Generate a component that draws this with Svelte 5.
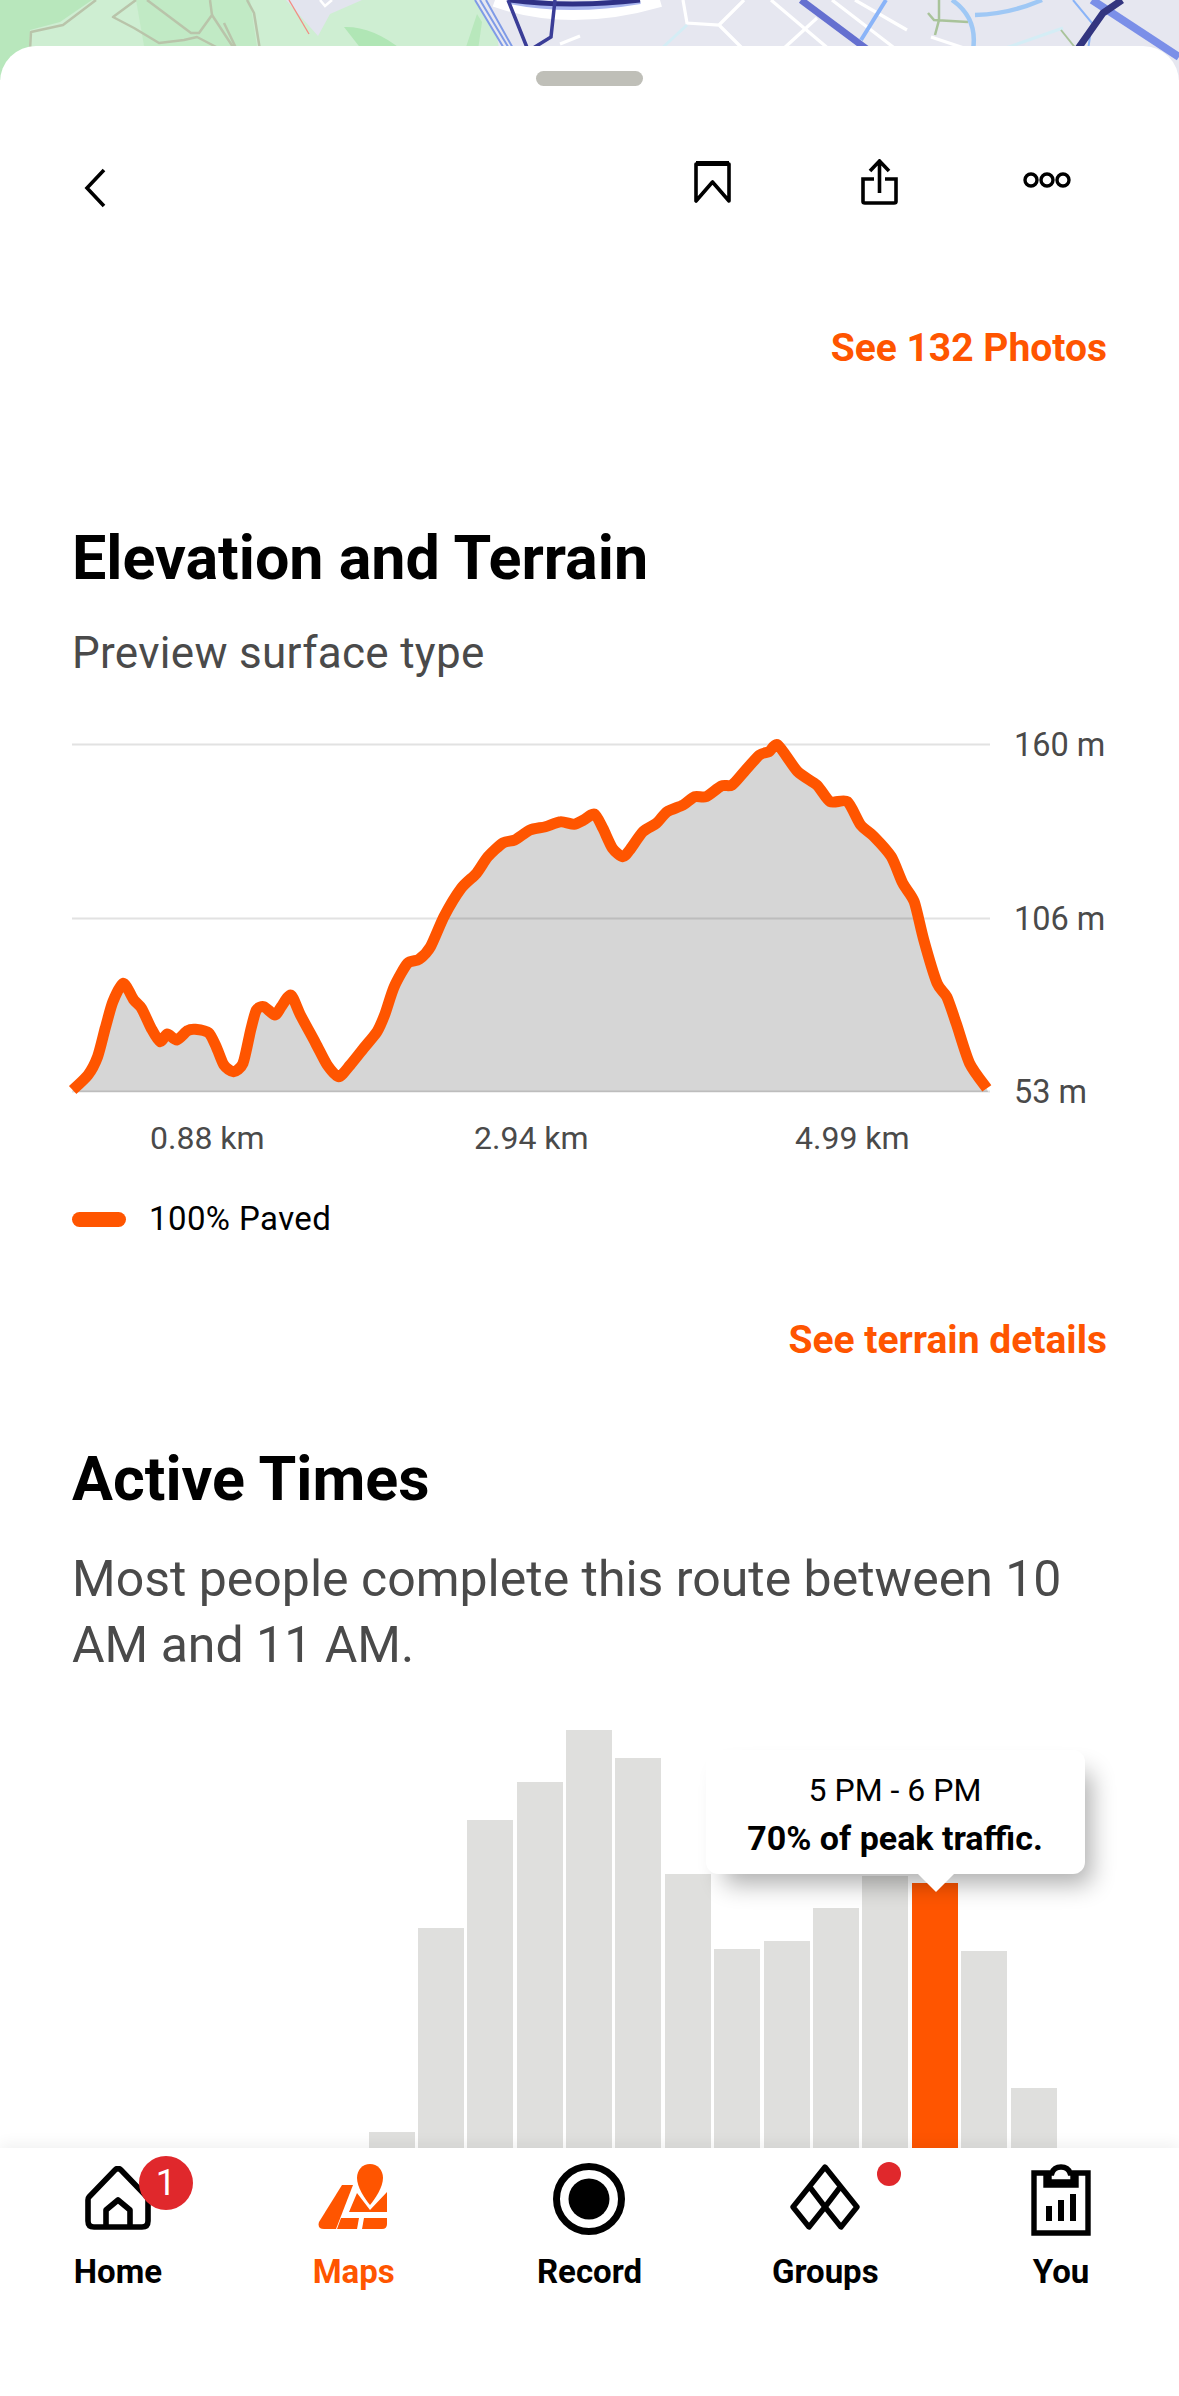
<script>
  const z2 = [[190,1170],[230,1125],[255,1070],[275,985],[295,905],[322,850],[350,900],[370,925],[395,985],[418,1025],[437,1002],[462,1020],[490,992],[510,988],[545,998],[565,1040],[585,1095],[610,1115],[635,1090],[655,990],[670,930],[690,920],[718,945],[735,920],[760,885],[785,945],[825,1030],[855,1095],[885,1130],[915,1095],[950,1045],[985,995],[1005,945],[1030,860],[1065,790],[1095,778],[1125,740],[1160,650],[1205,565],[1245,520],[1275,470],[1315,428],[1345,420],[1385,390],[1425,380],[1465,365],[1500,373],[1525,360]];
  const z3 = [[38,342],[60,385],[85,445],[112,470],[130,450],[165,395],[200,370],[228,335],[270,315],[300,290],[330,290],[370,258],[398,255],[430,215],[470,165],[495,155],[518,135],[570,215],[620,255],[655,305],[700,305],[735,375],[770,410],[815,470],[845,550],[875,605],[900,720],[935,850],[960,890],[985,970],[1020,1090],[1065,1165]];
  const pts = [
    ...z2.map(([x, y]) => [x / 2.613, 700 + y / 3 - 720]),
    ...z3.map(([x, y]) => [580 + x / 2.618, 700 + y / 3 - 720])
  ];
  function smooth(p) {
    const t = 0.12;
    let d = `M${p[0][0].toFixed(1)} ${p[0][1].toFixed(1)}`;
    for (let i = 0; i < p.length - 1; i++) {
      const a = p[Math.max(i - 1, 0)], b = p[i], c = p[i + 1], e = p[Math.min(i + 2, p.length - 1)];
      const c1 = [b[0] + (c[0] - a[0]) * t, b[1] + (c[1] - a[1]) * t];
      const c2 = [c[0] - (e[0] - b[0]) * t, c[1] - (e[1] - b[1]) * t];
      d += ` C${c1[0].toFixed(1)} ${c1[1].toFixed(1)} ${c2[0].toFixed(1)} ${c2[1].toFixed(1)} ${c[0].toFixed(1)} ${c[1].toFixed(1)}`;
    }
    return d;
  }
  const line = smooth(pts);
  const area = `${line} L988 372 L74 372 Z`;
  const tops = [2132, 1928, 1820, 1782, 1730, 1758, 1874, 1949, 1941, 1908, 1876, 1883, 1951, 2088];
  const bars = tops.map((t, i) => ({ h: 2148 - t, on: i === 11 }));
</script>

<div class="page">
  <svg class="map" viewBox="0 0 1179 80" aria-hidden="true">
    <rect width="1179" height="80" fill="#e6e7f0" />
    <path d="M0 0H490L505 80H0Z" fill="#ceeed2" />
    <path d="M0 0H92L60 22 30 30 28 80H0Z" fill="#b8e7bc" />
    <path d="M136 0L250 0 262 80H150Z" fill="#b9e8bd" opacity=".6" />
    <path d="M344 27Q372 26 402 50H362Z" fill="#b0e6b5" />
    <path d="M465 50L477 14 482 22 478 50Z" fill="#b8e8bc" />
    <path d="M286 0L318 36 330 14 362 0Z" fill="#e2e4ee" />
    <path d="M475 0L505 50H540L560 14 650 12 660 0Z" fill="#e6e7f0" />
    <g fill="none" stroke="#b9c4aa" stroke-width="2.5" stroke-linejoin="round">
      <path d="M96 0L63 25 31 32 30 50" />
      <path d="M136 0L113 17 134 28 159 43 184 40 197 37 222 50" />
      <path d="M147 0L191 33 199 33 212 15 210 0" />
      <path d="M212 15L235 50M224 23L237 50M247 0L254 13 260 50" />
    </g>
    <path d="M289 0L309 34" stroke="#f28b82" stroke-width="1.3" fill="none" />
    <path d="M320 0L325 6 332 0" stroke="#fff" stroke-width="2.5" fill="none" />
    <path d="M560 44L580 36" stroke="#fff" stroke-width="3" fill="none" />
    <path d="M495 0Q570 26 660 0" stroke="#fff" stroke-width="14" fill="none" />
    <path d="M510 0Q570 12 640 0" stroke="#a9b6ee" stroke-width="8" fill="none" />
    <path d="M510 0Q570 8 640 0" stroke="#2f3185" stroke-width="5" fill="none" />
    <g fill="none" stroke="#7f9be6" stroke-width="2">
      <path d="M475 0L505 50M480 0L510 50M486 0L514 50" />
    </g>
    <g fill="none" stroke="#3a3d97" stroke-width="3.5">
      <path d="M508 0L528 50M555 0L551 37 530 50" />
    </g>
    <g fill="none" stroke="#fff" stroke-width="3.2">
      <path d="M683 0L687 23 719 25 744 0M719 25L744 50M771 0L830 50M832 0L897 50M855 0L907 30M782 50L817 18M931 37L970 50" />
    </g>
    <path d="M687 25L660 50M1000 50L1063 28" fill="none" stroke="#d4edf5" stroke-width="3" />
    <path d="M801 0L868 50" fill="none" stroke="#6570d0" stroke-width="7" />
    <path d="M886 0L861 40" fill="none" stroke="#8ab4f8" stroke-width="4" />
    <path d="M939 0L939 20 935 35M928 13L934 20 968 22" fill="none" stroke="#a9c39a" stroke-width="2.5" />
    <path d="M952 0Q978 18 973 50M975 15Q1010 14 1042 0" fill="none" stroke="#9fc8f5" stroke-width="4.5" />
    <path d="M1061 30L1077 50" fill="none" stroke="#a9c39a" stroke-width="2" />
    <path d="M1073 0L1092 23 1088 50" fill="none" stroke="#8ab4f8" stroke-width="2" />
    <path d="M1092 0L1179 57" fill="none" stroke="#7b8fe8" stroke-width="8" />
    <path d="M1122 0L1103 13 1077 50" fill="none" stroke="#33357f" stroke-width="7" />
  </svg>

  <div class="sheet">
    <div class="handle"></div>

    <header class="top">
      <svg class="back" width="24" height="40" viewBox="0 0 24 40" aria-hidden="true"><path d="M20 2L3 20 20 38" fill="none" stroke="#000" stroke-width="3.6" /></svg>
      <div class="actions">
        <svg class="down" width="37" height="42" viewBox="0 0 37 42" aria-hidden="true"><path d="M2 40V3H35V40L18.5 21Z" fill="none" stroke="#000" stroke-width="3.6" stroke-linejoin="round" /><path d="M2 2.5H35" stroke="#000" stroke-width="5" /></svg>
        <svg class="down" width="37" height="46" viewBox="0 0 37 46" aria-hidden="true"><path d="M18.5 34V3M9 12L18.5 2 28 12M13 20H2V42.500Q2 44 4 44H33Q35 44 35 42.500V20H24" fill="none" stroke="#000" stroke-width="3.6" /></svg>
        <svg class="more" width="48" height="16" viewBox="0 0 48 16" aria-hidden="true"><g fill="none" stroke="#000" stroke-width="3.4"><ellipse cx="8" cy="8" rx="6" ry="6" /><ellipse cx="24" cy="8" rx="6" ry="6" /><ellipse cx="40" cy="8" rx="6" ry="6" /></g></svg>
      </div>
    </header>

    <div class="link first">See 132 Photos</div>

    <section class="terrain">
      <h2>Elevation and Terrain</h2>
      <p class="sub">Preview surface type</p>
      <svg class="elev" width="1179" height="440" viewBox="0 0 1179 440">
        <path d="M72 24.5H990M72 198.5H990M72 371.5H990" stroke="#e2e2e2" stroke-width="2" fill="none" />
        <path d={area} fill="#000" fill-opacity=".16" />
        <path d={line} fill="none" stroke="#ff5500" stroke-width="11" stroke-linejoin="round" />
        <g class="ax">
          <text x="1014" y="36">160 m</text>
          <text x="1014" y="210">106 m</text>
          <text x="1014" y="383">53 m</text>
          <text class="km" x="150" y="429">0.88 km</text>
          <text class="km" x="474" y="429">2.94 km</text>
          <text class="km" x="795" y="429">4.99 km</text>
        </g>
      </svg>
      <div class="legend"><span class="pill"></span><span>100% Paved</span></div>
    </section>

    <div class="link second">See terrain details</div>

    <section class="active">
      <h2>Active Times</h2>
      <p class="desc">Most people complete this route between 10 AM and 11 AM.</p>
    </section>

    <div class="hist">
      {#each bars as b}
        <div class="bar" class:on={b.on} style="height:{b.h}px"></div>
      {/each}
      <div class="tip">
        <div>5 PM - 6 PM</div>
        <div class="strong">70% of peak traffic.</div>
      </div>
    </div>
  </div>

  <nav class="tabs">
    <div class="tab">
      <span class="ico home">
        <svg width="66" height="64" viewBox="0 0 66 64" aria-hidden="true"><path d="M4 31Q3 32 3 34V55Q3 61 9 61H57Q63 61 63 55V34Q63 32 62 31L36 4Q33 1 30 4ZM21 61V44L33 34 45 44V61" fill="none" stroke="#000" stroke-width="5.6" stroke-linejoin="round" /></svg>
        <b class="badge">1</b>
      </span>
      <span class="lbl">Home</span>
    </div>
    <div class="tab cur">
      <span class="ico maps">
        <svg width="70" height="66" viewBox="0 0 70 66" aria-hidden="true"><g fill="#ff5500"><path d="M52 0C44.500 0 39 6 39 14 39 23 47 35 52 41 57 35 65 23 65 14 65 6 59.500 0 52 0Z" /><path d="M24 21H35L18 65H6Q-1 65 1 58Z" /><path d="M31 48L39 29 52 46 69 28V48Z" /><path d="M23 55H41L39 66H19Z" transform="translate(0 -1)" /><path d="M46 54H69V60Q69 65 64 65H44Z" /></g></svg>
      </span>
      <span class="lbl">Maps</span>
    </div>
    <div class="tab">
      <span class="ico rec">
        <svg width="72" height="72" viewBox="0 0 72 72" aria-hidden="true"><circle cx="36" cy="36" r="32.500" fill="none" stroke="#000" stroke-width="7" /><circle cx="36" cy="36" r="20.500" fill="#000" /></svg>
      </span>
      <span class="lbl">Record</span>
    </div>
    <div class="tab">
      <span class="ico">
        <svg width="70" height="66" viewBox="0 0 70 66" aria-hidden="true"><path d="M35 3L67 43 51 63 35 43 19 63 3 43ZM19 22L35 43 51 22" fill="none" stroke="#000" stroke-width="5.4" stroke-linejoin="round" /></svg>
        <b class="dot"></b>
      </span>
      <span class="lbl">Groups</span>
    </div>
    <div class="tab">
      <span class="ico">
        <svg width="60" height="72" viewBox="0 0 60 72" aria-hidden="true"><path d="M3 9H15V21H45V9H57V69H3ZM18 18V9H21Q23 3 30 3 37 3 39 9H42V18Z" fill="none" stroke="#000" stroke-width="5.4" /><path d="M15 42h6v15h-6zM27 36h6v21h-6zM39 30h6v27h-6z" fill="#000" /></svg>
      </span>
      <span class="lbl">You</span>
    </div>
  </nav>
</div>

<style>
  :global(body) { margin: 0; background: #fff; }
  .page {
    width: 1179px;
    height: 2396px;
    display: flex;
    flex-direction: column;
    overflow: hidden;
    font-family: Roboto, "Liberation Sans", sans-serif;
    color: #000;
  }
  .map { display: block; width: 1179px; height: 80px; flex: none; margin-bottom: -34px; filter: blur(.6px); }
  .sheet {
    flex: 1;
    min-height: 0;
    background: #fff;
    border-radius: 36px 36px 0 0;
    padding-top: 25px;
    position: relative;
    overflow: hidden;
  }
  .handle { width: 107px; height: 15px; border-radius: 8px; background: #bfbfb8; margin: 0 auto; }
  .top { display: flex; justify-content: space-between; align-items: flex-start; margin-top: 72px; padding: 0 108px 0 84px; height: 48px; }
  .back { margin-top: 10px; }
  .actions { display: flex; align-items: center; gap: 130px; height: 44px; }
  .down { position: relative; top: 1.5px; }
  .more { margin-left: -5px; }
  .link { font-size: 39px; font-weight: 700; color: #ff5500; text-align: right; padding-right: 72px; line-height: 44px; }
  .first { margin-top: 120px; }
  h2 { margin: 0; font-size: 61px; line-height: 68px; font-weight: 700; padding-left: 72px; }
  .terrain { margin-top: 154px; }
  .sub { margin: 36px 0 0; padding-left: 72px; font-size: 44px; letter-spacing: .3px; line-height: 50px; color: #4a4a4a; }
  .elev { display: block; margin-top: 42px; }
  .ax text { font-size: 32.5px; fill: #4a4a4a; font-family: Roboto, sans-serif; }
  .ax .km { font-size: 32px; }
  .legend { display: flex; align-items: center; gap: 23px; padding-left: 72px; margin-top: 39px; font-size: 33px; letter-spacing: .4px; line-height: 40px; }
  .pill { width: 54px; height: 15px; border-radius: 8px; background: #ff5500; }
  .second { margin-top: 79px; }
  .active { margin-top: 83px; }
  .desc { margin: 33px 0 0; padding: 0 72px; font-size: 50px; line-height: 66px; color: #4a4a4a; }
  .hist {
    position: absolute;
    left: 368.500px;
    bottom: 0;
    height: 418px;
    display: flex;
    align-items: flex-end;
    gap: 3.4px;
  }
  .bar { width: 46px; background: #dfdfdd; flex: none; }
  .bar.on { background: #ff5500; }
  .tip {
    position: absolute;
    left: 337px;
    top: 20px;
    width: 379px;
    height: 124px;
    box-sizing: border-box;
    background: #fff;
    border-radius: 12px;
    box-shadow: 12px 16px 24px -6px rgba(0,0,0,.32);
    text-align: center;
    font-size: 32px;
    line-height: 48px;
    padding-top: 16px;
  }
  .tip::after {
    content: "";
    position: absolute;
    left: 212px;
    bottom: -18px;
    border-left: 18px solid transparent;
    border-right: 18px solid transparent;
    border-top: 18px solid #fff;
  }
  .strong { font-weight: 700; font-size: 34px; }
  .tabs {
    height: 248px;
    flex: none;
    display: grid;
    grid-template-columns: repeat(5, 1fr);
    background: #fff;
    position: relative;
    box-shadow: 0 -4px 14px rgba(0,0,0,.06);
  }
  .tab { display: flex; flex-direction: column; align-items: center; }
  .ico { position: relative; display: flex; align-items: flex-start; justify-content: center; height: 88px; box-sizing: border-box; padding-top: 16px; }
  .ico.home { padding-top: 18px; }
  .ico.rec { padding-top: 15px; }
  .ico.maps svg { margin-left: -2px; }
  .lbl { font-size: 33px; font-weight: 700; line-height: 40px; margin-top: 16px; }
  .cur .lbl { color: #ff5500; }
  .badge {
    position: absolute;
    left: 54px;
    top: 8px;
    width: 54px;
    height: 54px;
    border-radius: 50%;
    background: #e0282c;
    color: #fff;
    font-size: 36px;
    font-weight: 400;
    line-height: 54px;
    text-align: center;
  }
  .dot {
    position: absolute;
    left: 87px;
    top: 14px;
    width: 24px;
    height: 24px;
    border-radius: 50%;
    background: #e0282c;
  }
</style>
